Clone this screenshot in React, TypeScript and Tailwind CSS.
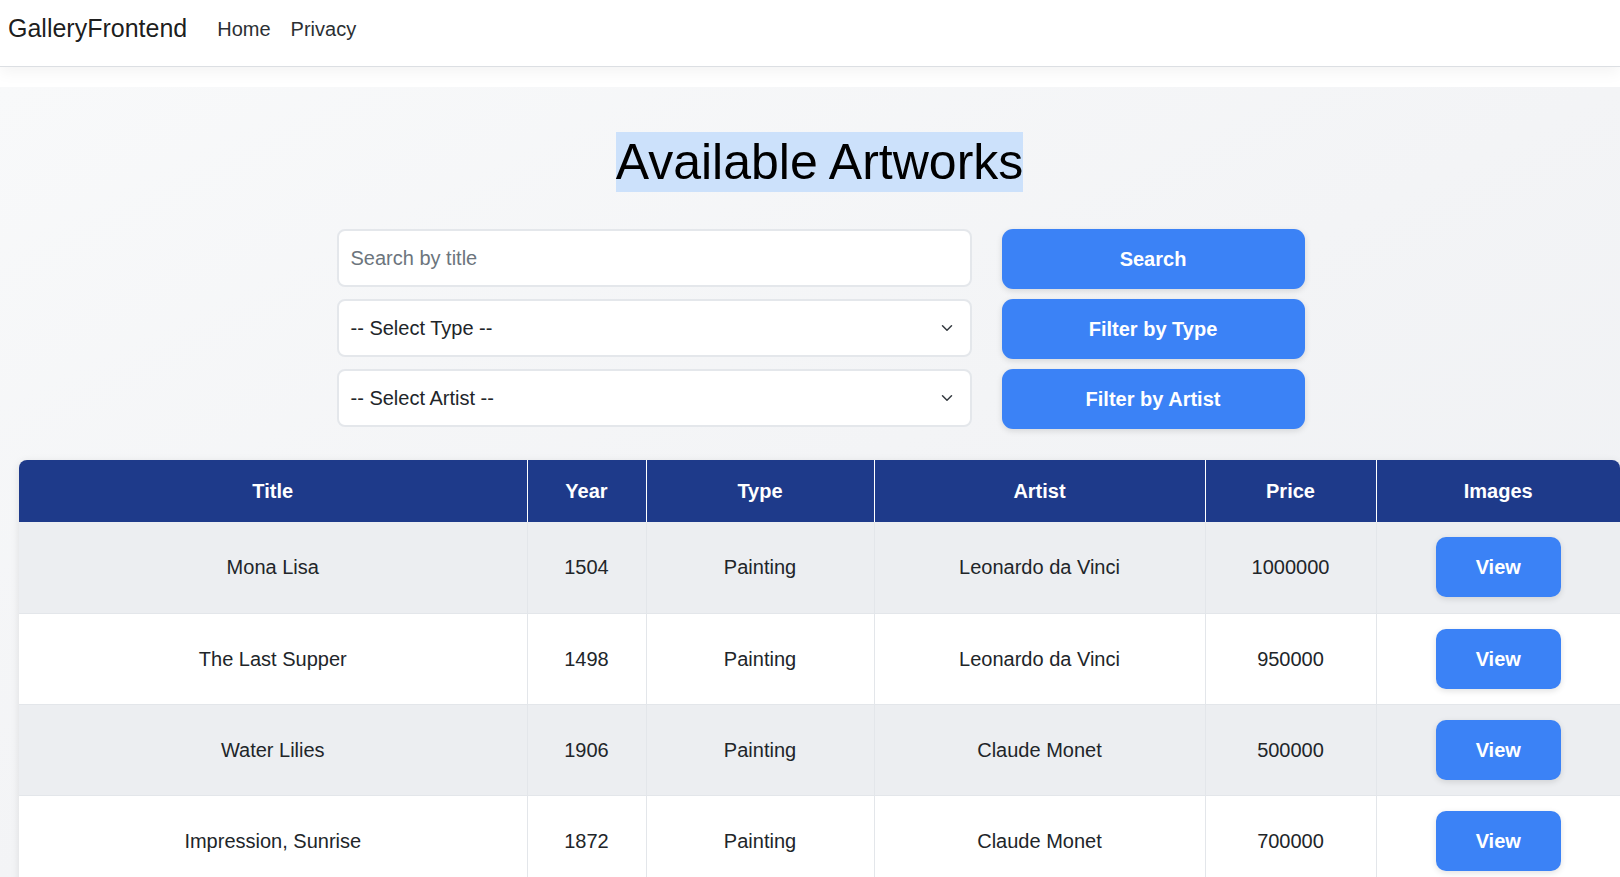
import React from 'react';

type Artwork = {
  title: string;
  year: number;
  type: string;
  artist: string;
  price: number;
};

const ARTWORKS: Artwork[] = [
  { title: 'Mona Lisa', year: 1504, type: 'Painting', artist: 'Leonardo da Vinci', price: 1000000 },
  { title: 'The Last Supper', year: 1498, type: 'Painting', artist: 'Leonardo da Vinci', price: 950000 },
  { title: 'Water Lilies', year: 1906, type: 'Painting', artist: 'Claude Monet', price: 500000 },
  { title: 'Impression, Sunrise', year: 1872, type: 'Painting', artist: 'Claude Monet', price: 700000 },
];

const COLUMNS = [
  { label: 'Title', width: 'w-[508px]' },
  { label: 'Year', width: 'w-[119px]' },
  { label: 'Type', width: 'w-[228px]' },
  { label: 'Artist', width: 'w-[331px]' },
  { label: 'Price', width: 'w-[171px]' },
  { label: 'Images', width: 'w-[244px]' },
];

const Chevron = () => (
  <svg width="16" height="12" viewBox="0 0 16 16" fill="none" className="shrink-0">
    <path d="M2 5l6 6 6-6" stroke="#343a40" strokeWidth="2" strokeLinecap="round" strokeLinejoin="round" />
  </svg>
);

const ActionButton: React.FC<{ children: React.ReactNode }> = ({ children }) => (
  <button className="h-[60px] w-[303px] shrink-0 rounded-[11px] bg-[#3b82f6] text-[20px] font-bold text-white shadow-[0_2px_6px_rgba(0,0,0,0.12)]">
    {children}
  </button>
);

const FakeSelect: React.FC<{ label: string }> = ({ label }) => (
  <div className="flex h-[58px] w-[635px] shrink-0 items-center justify-between rounded-[8px] border-2 border-[#e4e7eb] bg-white pl-3 pr-[15px] text-[20px] text-[#212529]">
    <span>{label}</span>
    <Chevron />
  </div>
);

export default function App() {
  return (
    <div className="h-screen overflow-hidden bg-white font-['Liberation_Sans',Arial,sans-serif] text-[#212529]">
      {/* Navbar */}
      <nav className="flex h-[67px] items-center border-b border-[#dcdfe3] bg-white pb-[9px] pl-2 shadow-[0_5px_15px_rgba(0,0,0,0.05)]">
        <span className="mr-[30px] text-[25px] text-black/90">GalleryFrontend</span>
        <a className="mr-[20px] text-[20px] text-[#2b2f33]">Home</a>
        <a className="text-[20px] text-[#2b2f33]">Privacy</a>
      </nav>

      <main className="mt-[20px] min-h-[800px] bg-gradient-to-br from-[#f8f9fa] via-[#f3f4f6] to-[#eef0f3] pl-[19px]">
        <div className="pt-[45px] text-center">
          <h1 className="inline-block bg-[#cce1fb] text-[50px] leading-[60px] text-black">Available Artworks</h1>
        </div>

        {/* Controls */}
        <div className="ml-[2px] mt-[37px] flex flex-col items-center gap-[10px]">
          <div className="flex gap-[30px]">
            <div className="flex h-[58px] w-[635px] shrink-0 items-center rounded-[8px] border-2 border-[#e4e7eb] bg-white px-3 text-[20px] text-[#6c757d]">
              Search by title
            </div>
            <ActionButton>Search</ActionButton>
          </div>
          <div className="flex gap-[30px]">
            <FakeSelect label="-- Select Type --" />
            <ActionButton>Filter by Type</ActionButton>
          </div>
          <div className="flex gap-[30px]">
            <FakeSelect label="-- Select Artist --" />
            <ActionButton>Filter by Artist</ActionButton>
          </div>
        </div>

        {/* Table */}
        <div className="mt-[31px] w-[1601px] overflow-hidden rounded-t-[8px] shadow-[0_2px_8px_rgba(0,0,0,0.1)]">
          <table className="w-full table-fixed border-collapse text-[20px]">
            <colgroup>
              {COLUMNS.map((c) => (
                <col key={c.label} className={c.width} />
              ))}
            </colgroup>
            <thead>
              <tr className="bg-[#1e3a8a] text-white">
                {COLUMNS.map((c, i) => (
                  <th
                    key={c.label}
                    className={`h-[62px] py-0 text-center font-bold ${i < COLUMNS.length - 1 ? 'border-r border-white' : ''}`}
                  >
                    {c.label}
                  </th>
                ))}
              </tr>
            </thead>
            <tbody>
              {ARTWORKS.map((a, idx) => (
                <tr key={a.title} className={`border-b border-[#e3e6ea] ${idx % 2 === 0 ? 'bg-[#eceef1]' : 'bg-white'}`}>
                  <td className="h-[91px] border-r border-[#e3e6ea] text-center">{a.title}</td>
                  <td className="border-r border-[#e3e6ea] text-center">{a.year}</td>
                  <td className="border-r border-[#e3e6ea] text-center">{a.type}</td>
                  <td className="border-r border-[#e3e6ea] text-center">{a.artist}</td>
                  <td className="border-r border-[#e3e6ea] text-center">{a.price}</td>
                  <td className="text-center">
                    <button className="h-[60px] w-[125px] rounded-[10px] bg-[#3b82f6] font-bold text-white shadow-[0_2px_6px_rgba(0,0,0,0.12)]">
                      View
                    </button>
                  </td>
                </tr>
              ))}
            </tbody>
          </table>
        </div>
      </main>
    </div>
  );
}
